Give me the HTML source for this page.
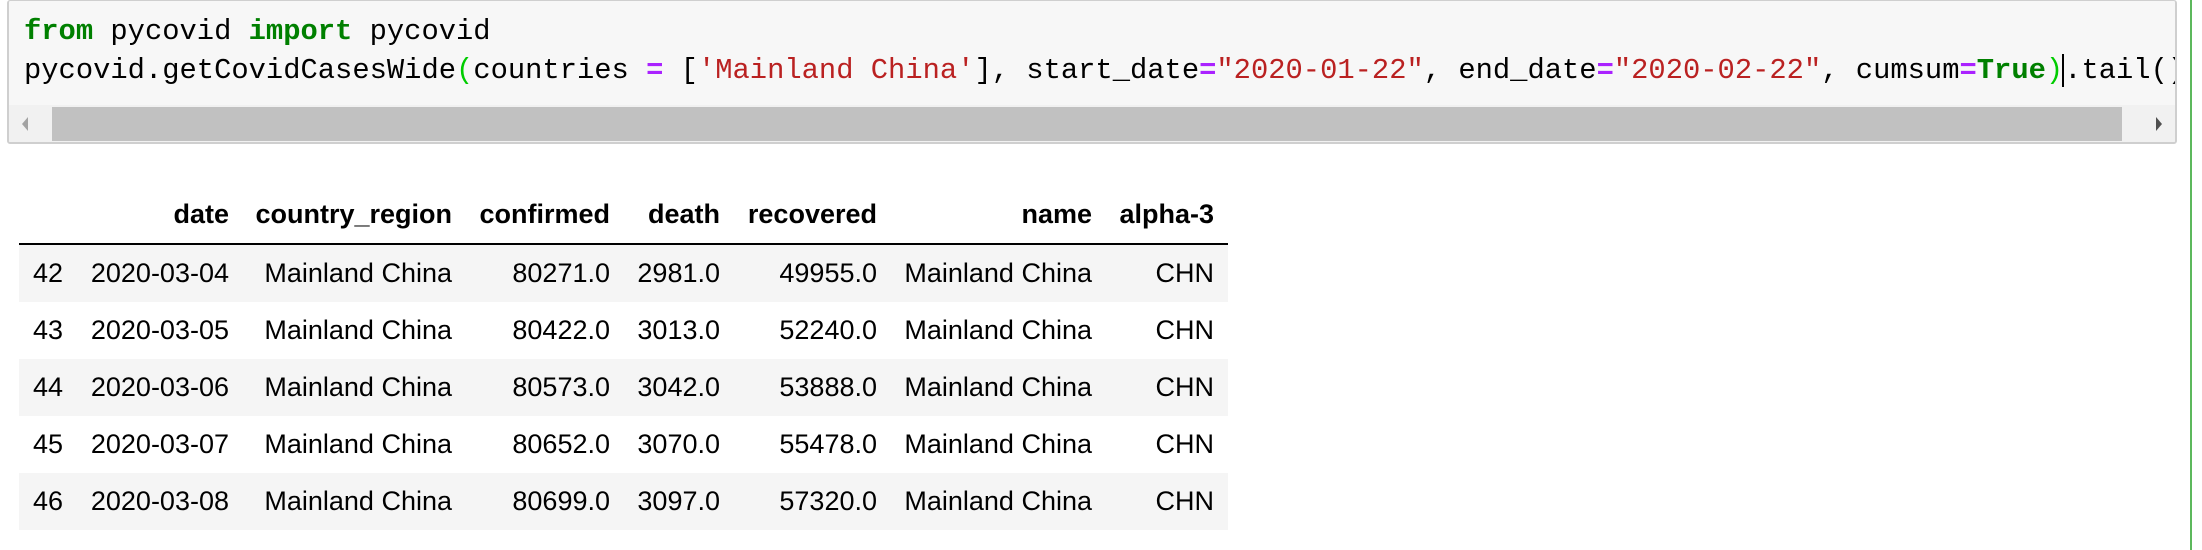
<!DOCTYPE html>
<html><head><meta charset="utf-8"><style>
body{margin:0;width:2202px;height:550px;background:#fff;position:relative;overflow:hidden;font-family:"Liberation Sans",Arial,sans-serif}
.code{position:absolute;left:7px;top:0;width:2170px;height:144px;background:#f7f7f7;border:2px solid #cfcfcf;border-top:1px solid #cfcfcf;border-radius:3px;box-sizing:border-box;overflow:hidden}
.ln{position:absolute;left:15px;font-family:"Liberation Mono","DejaVu Sans Mono",monospace;font-size:28.8px;white-space:pre;color:#000}
.k{color:#008000;font-weight:bold}.s{color:#ba2121}.o{color:#aa22ff;font-weight:bold}.p{color:#0c0}
.sb{position:absolute;left:0;top:104px;width:100%;height:38px;background:#f1f1f1}
.th{position:absolute;left:43px;top:2px;width:2070px;height:34px;background:#c1c1c1}
.gl{position:absolute;left:2190px;top:0;width:2px;height:550px;background:#5cb85c}
.r{position:absolute;left:19px;width:1209px;height:57px}
.r.sh{background:#f5f5f5}
.c{position:absolute;width:300px;text-align:right;font-size:27px;line-height:57px;color:#000}
.h .c{font-weight:bold}
</style></head><body>
<div class="gl"></div>
<div class="code">
<div class="ln" style="top:14px"><span class="k">from</span> pycovid <span class="k">import</span> pycovid</div>
<div class="ln" style="top:53px">pycovid.getCovidCasesWide<span class="p">(</span>countries <span class="o">=</span> [<span class="s">'Mainland China'</span>], start_date<span class="o">=</span><span class="s">"2020-01-22"</span>, end_date<span class="o">=</span><span class="s">"2020-02-22"</span>, cumsum<span class="o">=</span><span class="k">True</span><span class="p">)</span><span style="border-left:2px solid #000;margin-left:-1px"></span>.tail()</div>
<div class="sb"><div class="th"></div>
<svg style="position:absolute;left:11px;top:11px" width="10" height="16"><path d="M8 1 L2 8 L8 15Z" fill="#a3a3a3"/></svg>
<svg style="position:absolute;left:2145px;top:11px" width="10" height="16"><path d="M2 1 L8 8 L2 15Z" fill="#505050"/></svg>
</div>
</div>
<div class="r h" style="top:186px"><div class="c" style="left:-90px">date</div><div class="c" style="left:133px">country_region</div><div class="c" style="left:291px">confirmed</div><div class="c" style="left:401px">death</div><div class="c" style="left:558px">recovered</div><div class="c" style="left:773px">name</div><div class="c" style="left:895px">alpha-3</div></div>
<div style="position:absolute;left:19px;top:243px;width:1209px;height:2px;background:#000"></div>
<div id="rows"></div>
<script>
var d=[["42","2020-03-04","80271.0","2981.0","49955.0"],["43","2020-03-05","80422.0","3013.0","52240.0"],["44","2020-03-06","80573.0","3042.0","53888.0"],["45","2020-03-07","80652.0","3070.0","55478.0"],["46","2020-03-08","80699.0","3097.0","57320.0"]];
var h="";d.forEach(function(r,i){h+='<div class="r'+(i%2==0?' sh':'')+'" style="top:'+(245+57*i)+'px"><div class="c" style="left:-256px">'+r[0]+'</div><div class="c" style="left:-90px">'+r[1]+'</div><div class="c" style="left:133px">Mainland China</div><div class="c" style="left:291px">'+r[2]+'</div><div class="c" style="left:401px">'+r[3]+'</div><div class="c" style="left:558px">'+r[4]+'</div><div class="c" style="left:773px">Mainland China</div><div class="c" style="left:895px">CHN</div></div>';});
document.getElementById("rows").innerHTML=h;
</script>
</body></html>
